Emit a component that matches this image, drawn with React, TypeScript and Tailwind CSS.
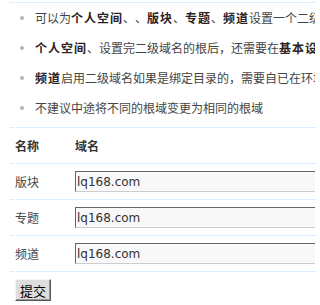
const tips: { text: string; bold?: boolean }[][] = [
  [
    { text: "可以为" },
    { text: "个人空间", bold: true },
    { text: "、、" },
    { text: "版块", bold: true },
    { text: "、" },
    { text: "专题", bold: true },
    { text: "、" },
    { text: "频道", bold: true },
    { text: "设置一个二级域名的根" },
  ],
  [
    { text: "个人空间", bold: true },
    { text: "、设置完二级域名的根后，还需要在" },
    { text: "基本设置", bold: true },
    { text: "中开启" },
  ],
  [
    { text: "频道", bold: true },
    { text: "启用二级域名如果是绑定目录的，需要自已在环境中配置" },
  ],
  [{ text: "不建议中途将不同的根域变更为相同的根域" }],
];

const rows = ["版块", "专题", "频道"];

// keep full-width punctuation one em wide, like the original page font
function Chars({ text }: { text: string }) {
  return (
    <>
      {text.split(/([、，])/).map((s, i) =>
        s === "、" || s === "，" ? (
          <span key={i} className="inline-block w-[12px] text-left">
            {s}
          </span>
        ) : (
          <span key={i}>{s}</span>
        )
      )}
    </>
  );
}

export default function App() {
  return (
    <div
      className="w-[315px] h-[305px] overflow-hidden bg-white text-[12px] text-[#444]"
      style={{ fontFamily: '"Noto Sans CJK SC", "Liberation Sans", sans-serif' }}
    >
      {/* top rule */}
      <div className="ml-[10px] h-[3px] border-b border-dotted border-[#c9dcee]" />

      {/* tips */}
      <ul>
        {tips.map((parts, i) => (
          <li key={i} className="flex items-center h-[30px] whitespace-nowrap">
            <span className="ml-[20px] mr-[11px] w-[4px] h-[4px] rounded-full bg-[#b5b5b5] shrink-0" />
            <span className="leading-[30px]">
              {parts.map((p, j) =>
                p.bold ? (
                  <b key={j} className="font-bold tracking-[1px] text-[#2e2222]">
                    <Chars text={p.text} />
                  </b>
                ) : (
                  <Chars key={j} text={p.text} />
                )
              )}
            </span>
          </li>
        ))}
      </ul>

      {/* domain table */}
      <div className="mt-[4px] ml-[10px] border-t border-dotted border-[#c9dcee]">
        <div className="flex items-center h-[36px] pl-[5px] border-b border-dotted border-[#c9dcee] font-bold text-[#333]">
          <span className="w-[60px]">名称</span>
          <span>域名</span>
        </div>
        {rows.map((name) => (
          <div
            key={name}
            className="flex items-center h-[36px] pl-[5px] border-b border-dotted border-[#c9dcee]"
          >
            <span className="w-[60px] shrink-0">{name}</span>
            <input
              defaultValue="lq168.com"
              className="shrink-0 w-[300px] h-[21px] px-[1px] bg-[#f8f8f8] text-[#333] text-[12px] border border-t-[#666] border-l-[#666] border-r-[#ccc] border-b-[#ccc] outline-none"
              style={{ fontFamily: '"DejaVu Sans", Verdana, sans-serif' }}
            />
          </div>
        ))}
      </div>

      <div className="pl-[15px] mt-[7px]">
        <button className="h-[22px] w-[36px] bg-[#dddddd] text-[13px] text-black leading-none border border-t-[#f4f4f4] border-l-[#f4f4f4] border-r-[#555] border-b-[#555] shadow-[inset_-1px_-1px_0_#999]">
          提交
        </button>
      </div>
    </div>
  );
}
